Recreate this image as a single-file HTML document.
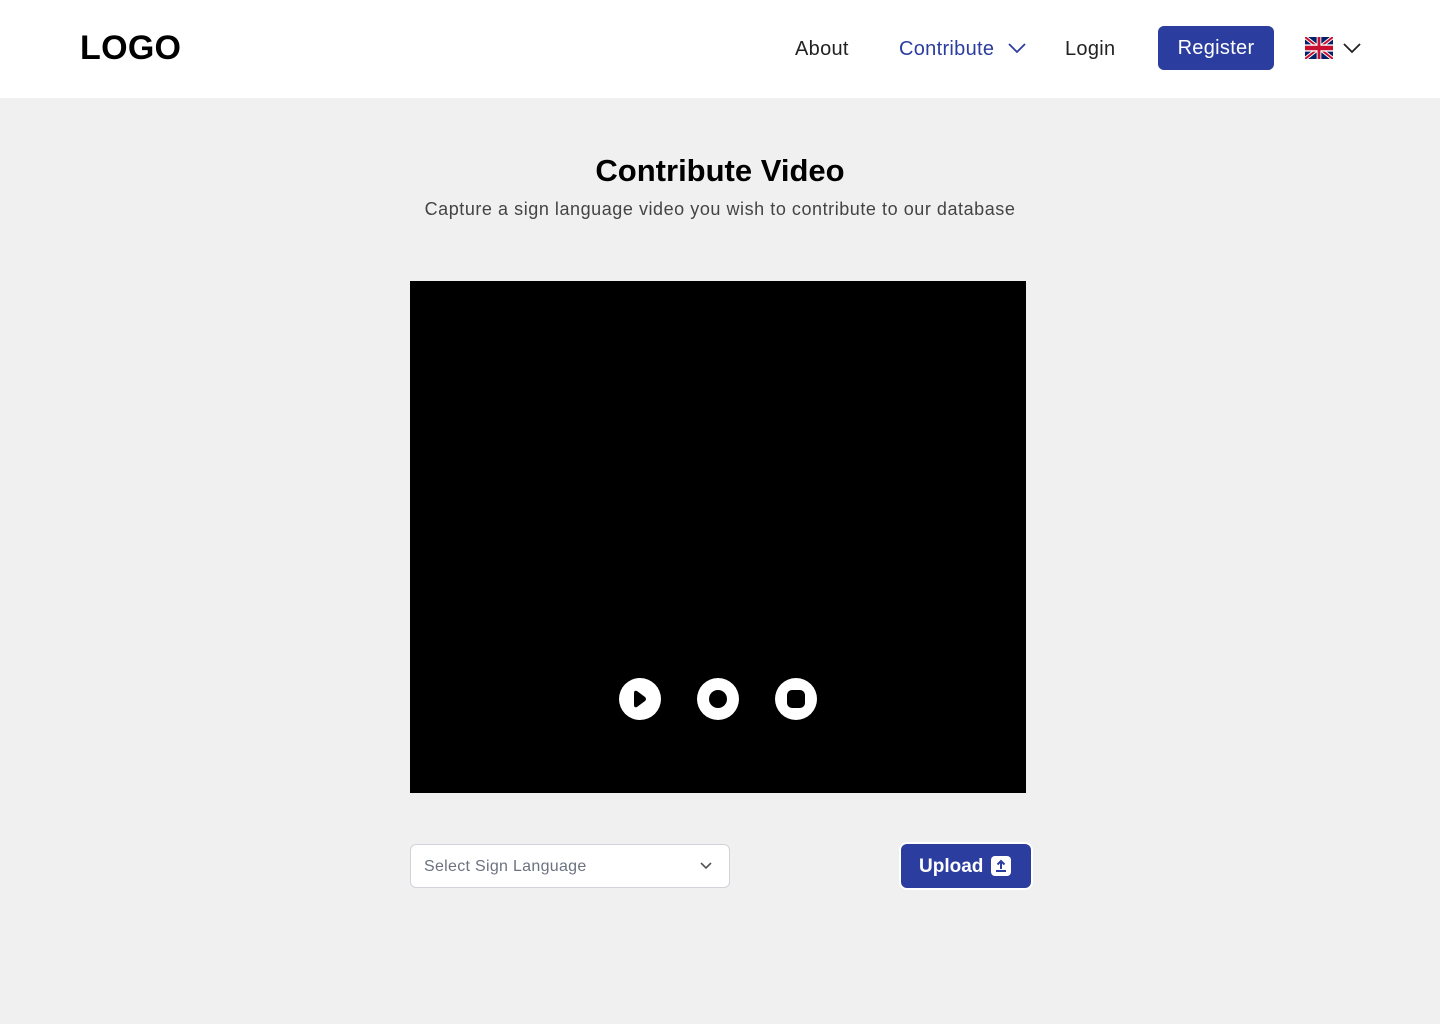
<!DOCTYPE html>
<html><head><meta charset="utf-8"><style>
*{margin:0;padding:0;box-sizing:border-box}
body{width:1440px;height:1024px;background:#f0f0f0;font-family:"Liberation Sans",sans-serif;position:relative;overflow:hidden}
header{position:absolute;left:0;top:0;width:1440px;height:98px;background:#fff}
.logo{position:absolute;left:80px;top:29px;font-size:34px;font-weight:bold;color:#000;letter-spacing:0.3px}
.nav{position:absolute;top:38px;font-size:20px;color:#222;letter-spacing:0.3px}
.reg{position:absolute;left:1158px;top:26px;width:116px;height:44px;background:#2b3d9f;border-radius:6px;color:#fff;font-size:20px;text-align:center;line-height:44px;letter-spacing:0.3px}
h1{position:absolute;top:153px;width:1440px;text-align:center;font-size:31px;font-weight:bold;color:#000}
.sub{position:absolute;top:199px;width:1440px;text-align:center;font-size:18px;color:#444;letter-spacing:0.55px}
.video{position:absolute;left:410px;top:281px;width:616px;height:512px;background:#000}
.sel{position:absolute;left:410px;top:844px;width:320px;height:44px;background:#fff;border:1px solid #d0d3d9;border-radius:6px;font-size:16px;color:#6b7280;padding-left:13px;line-height:44px;letter-spacing:0.3px}
.up{position:absolute;left:899px;top:842px;width:134px;height:48px;background:#fff;border-radius:8px}
.up div{position:absolute;left:2px;top:2px;width:130px;height:44px;background:#2b3d9f;border-radius:6px;color:#fff;font-weight:bold;font-size:19px;line-height:46px;padding-left:18px}
</style></head><body>
<header>
<div class="logo">LOGO</div>
<div class="nav" style="left:795px">About</div>
<div class="nav" style="left:899px;color:#2b3d9f">Contribute</div>
<svg style="position:absolute;left:1007px;top:42px" width="20" height="12"><path d="M2 2l8 8 8-8" stroke="#2b3d9f" stroke-width="1.8" fill="none"/></svg>
<div class="nav" style="left:1065px">Login</div>
<div class="reg">Register</div>
<svg style="position:absolute;left:1305px;top:37px" width="28" height="22" viewBox="0 0 60 30" preserveAspectRatio="none"><rect width="60" height="30" fill="#012169"/><path d="M0 0L60 30M60 0L0 30" stroke="#fff" stroke-width="6"/><path d="M0 0L60 30M60 0L0 30" stroke="#C8102E" stroke-width="3"/><path d="M30 0V30M0 15H60" stroke="#fff" stroke-width="10"/><path d="M30 0V30M0 15H60" stroke="#C8102E" stroke-width="6"/></svg>
<svg style="position:absolute;left:1342px;top:42px" width="20" height="12"><path d="M2 2l8 8 8-8" stroke="#222" stroke-width="1.8" fill="none"/></svg>
</header>
<h1>Contribute Video</h1>
<div class="sub">Capture a sign language video you wish to contribute to our database</div>
<div class="video">
<svg style="position:absolute;left:0;top:0" width="616" height="512">
<circle cx="230" cy="418" r="21" fill="#fff"/><path d="M224 412 Q224 409 227 410 L235 416 Q237 418 235 420 L227 426 Q224 427 224 424Z" fill="#000"/>
<circle cx="308" cy="418" r="21" fill="#fff"/><circle cx="308" cy="418" r="9" fill="#000"/>
<circle cx="386" cy="418" r="21" fill="#fff"/><rect x="377" y="409" width="18" height="18" rx="5" fill="#000"/>
</svg>
</div>
<div class="sel">Select Sign Language</div>
<svg style="position:absolute;left:699px;top:861px" width="14" height="10"><path d="M2 2l5 5 5-5" stroke="#555" stroke-width="1.6" fill="none"/></svg>
<div class="up"><div>Upload</div>
<svg style="position:absolute;left:92px;top:14px" width="20" height="20"><rect width="20" height="20" rx="4" fill="#fff"/><path d="M10 13V5M6.5 8.5L10 5l3.5 3.5M5 15h10" stroke="#2b3d9f" stroke-width="2" fill="none"/></svg>
</div>
</body></html>
